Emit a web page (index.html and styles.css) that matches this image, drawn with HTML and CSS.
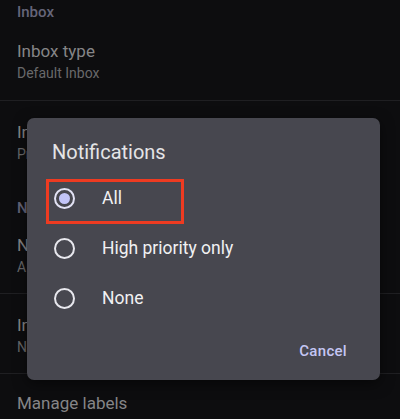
FILE: index.html
```html
<!DOCTYPE html>
<html lang="en">
<head>
  <meta charset="UTF-8" />
  <meta name="viewport" content="width=device-width, initial-scale=1" />
  <title>Settings</title>
  <link rel="stylesheet" href="styles.css">
</head>
<body>

  <main class="settings">
    <div class="section-title first">Inbox</div>
    <div class="item">
      <div class="item-title">Inbox type</div>
      <div class="item-sub">Default Inbox</div>
    </div>
    <div class="item bordered">
      <div class="item-title">Inbox categories</div>
      <div class="item-sub">Primary, Social, Promotions</div>
    </div>
    <div class="section-title">Notifications</div>
    <div class="item compact">
      <div class="item-title">Notifications</div>
      <div class="item-sub">All</div>
    </div>
    <div class="item bordered">
      <div class="item-title">Inbox notifications</div>
      <div class="item-sub">Notify for every message</div>
    </div>
    <div class="item bordered last">
      <div class="item-title">Manage labels</div>
    </div>
  </main>

  <div class="dialog">
    <h2 class="dialog-title">Notifications</h2>
    <div class="options">
      <label class="option highlight">
        <span class="radio checked"></span>
        <span class="option-label">All</span>
      </label>
      <label class="option">
        <span class="radio"></span>
        <span class="option-label">High priority only</span>
      </label>
      <label class="option">
        <span class="radio"></span>
        <span class="option-label">None</span>
      </label>
    </div>
    <div class="actions">
      <button type="button" class="btn-text">Cancel</button>
    </div>
  </div>

</body>
</html>
```

FILE: styles.css
```css
* {
  box-sizing: border-box;
}

html, body {
  margin: 0;
  padding: 0;
  height: 100%;
  background: #0d0d0f;
  font-family: Roboto, 'Noto Sans', sans-serif;
  overflow: hidden;
}

.section-title {
  padding: 17px 17px 5px;
  height: 44px;
  font-size: 15px;
  line-height: 22px;
  font-weight: 500;
  color: #656579;
}

.section-title.first {
  padding-top: 1px;
  height: 20px;
}

.item {
  padding: 20px 17px 0;
  height: 80px;
}

.item.compact {
  padding-top: 10px;
  height: 69px;
}

.item.bordered {
  border-top: 1px solid #1f1f22;
}

.item.last {
  padding-top: 18px;
}

.item-title {
  font-size: 17px;
  line-height: 22px;
  color: #858587;
}

.item-sub {
  font-size: 14px;
  line-height: 22px;
  color: #69696b;
}

/* diálogo por cima da lista */
.dialog {
  position: absolute;
  left: 27px;
  top: 118px;
  width: 353px;
  height: 262px;
  background: #47474f;
  border-radius: 7px;
  box-shadow: 0 4px 14px rgba(0,0,0,0.5);
  padding: 22px 33px 0 25px;
}

.dialog-title {
  margin: 0 0 9px;
  font-size: 20px;
  line-height: 24px;
  font-weight: 400;
  color: #e4e4e6;
}

.option {
  position: relative;
  display: flex;
  align-items: center;
  height: 50px;
  padding-left: 2px;
}

.highlight::after {
  content: '';
  position: absolute;
  left: -6px;
  top: 6px;
  width: 132px;
  height: 39px;
  border: 3px solid #ee3b21;
}

.radio {
  width: 21px;
  height: 21px;
  border: 2px solid #e8e8ee;
  border-radius: 50%;
  display: flex;
  align-items: center;
  justify-content: center;
}

.radio.checked {
  border-color: #e2e2f4;
}

.radio.checked::before {
  content: '';
  width: 11px;
  height: 11px;
  border-radius: 50%;
  background: #c3c5f8;
}

.option-label {
  margin-left: 27px;
  font-size: 17.5px;
  color: #f1f1f3;
}

.actions {
  display: flex;
  justify-content: flex-end;
  margin-top: 18px;
}

.btn-text {
  border: none;
  background: none;
  padding: 0;
  font-family: inherit;
  font-size: 15px;
  line-height: 20px;
  font-weight: 500;
  color: #c4c6f3;
  letter-spacing: 0.3px;
}
```
